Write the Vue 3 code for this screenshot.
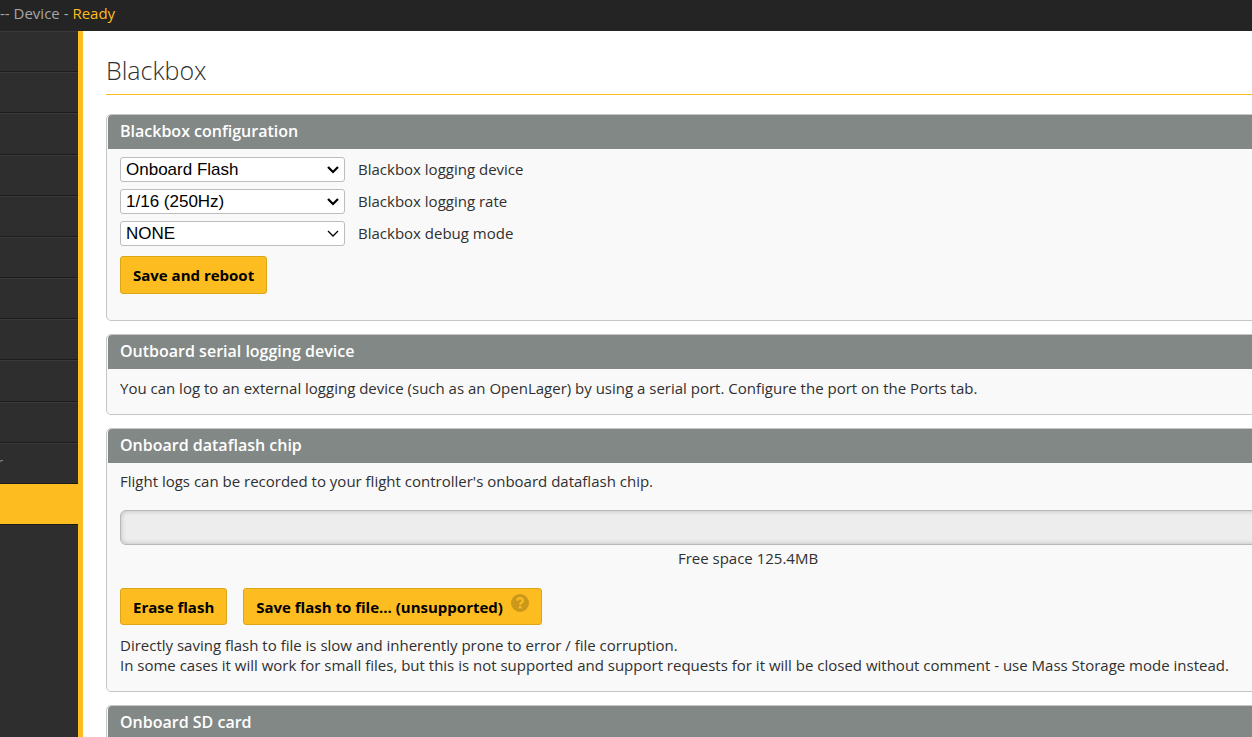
<script setup>
import { ref } from 'vue'

const tabs = ['', '', '', '', '', '', '', '', '', '', 'r', '']
const activeTab = 11

const device = ref('Onboard Flash')
const rate = ref('1/16 (250Hz)')
const debug = ref('NONE')
const fields = [
  { id: 'device', label: 'Blackbox logging device', model: device, stroke: 2.2 },
  { id: 'rate', label: 'Blackbox logging rate', model: rate, stroke: 2.2 },
  { id: 'debug', label: 'Blackbox debug mode', model: debug, stroke: 1.3 },
]
</script>

<template>
  <div class="app">
    <header class="status">-- Device - <span class="ready">Ready</span></header>
    <div class="columns">
      <nav class="sidebar">
        <ul>
          <li v-for="(tab, i) in tabs" :key="i" :class="{ active: i === activeTab }">{{ tab }}</li>
        </ul>
      </nav>
      <main class="content">
        <h1>Blackbox</h1>

        <section class="panel">
          <h2>Blackbox configuration</h2>
          <div class="body config">
            <div v-for="f in fields" :key="f.id" class="field">
              <div class="picker">
                <select :id="f.id">
                  <option>{{ f.model.value }}</option>
                </select>
                <svg class="chevron" width="14" height="10" viewBox="0 0 14 10" fill="none" stroke="#000">
                  <path d="M2 2l5 5 5-5" :stroke-width="f.stroke" />
                </svg>
              </div>
              <label :for="f.id">{{ f.label }}</label>
            </div>
            <button type="button" class="btn">Save and reboot</button>
          </div>
        </section>

        <section class="panel">
          <h2>Outboard serial logging device</h2>
          <div class="body serial">
            <p>You can log to an external logging device (such as an OpenLager) by using a serial port. Configure the port on the Ports tab.</p>
          </div>
        </section>

        <section class="panel">
          <h2>Onboard dataflash chip</h2>
          <div class="body flash">
            <p>Flight logs can be recorded to your flight controller's onboard dataflash chip.</p>
            <div class="meter"></div>
            <p class="free">Free space 125.4MB</p>
            <div class="actions">
              <button type="button" class="btn">Erase flash</button>
              <button type="button" class="btn">
                <span>Save flash to file... (unsupported)</span>
                <svg class="help" width="18" height="18" viewBox="0 0 18 18">
                  <circle cx="9" cy="9" r="9" fill="#cb981b" />
                  <path d="M6.2 6.6c.2-3.4 5.800-3.200 5.700 0C11.800 8.600 9.200 8.600 9.200 10.800" fill="none" stroke="#fdbc20" stroke-width="2.200" />
                  <rect x="8" y="12" width="2.400" height="2.400" fill="#fdbc20" />
                </svg>
              </button>
            </div>
            <p>Directly saving flash to file is slow and inherently prone to error / file corruption.<br>In some cases it will work for small files, but this is not supported and support requests for it will be closed without comment - use Mass Storage mode instead.</p>
          </div>
        </section>

        <section class="panel">
          <h2>Onboard SD card</h2>
          <div class="body"></div>
        </section>
      </main>
    </div>
  </div>
</template>

<style>
body {
  margin: 0;
  overflow: hidden;
}
</style>

<style scoped>
.app {
  display: flex;
  flex-direction: column;
  height: 100vh;
  overflow: hidden;
  background: #fff;
  color: #303030;
  font: 15px/20px "Open Sans", sans-serif;
}
.status {
  flex: none;
  height: 31px;
  box-sizing: border-box;
  padding-top: 3px;
  background: #242424;
  color: #a6a6a6;
  white-space: nowrap;
}
.ready {
  color: #fdbc20;
}
.columns {
  display: flex;
  flex: 1;
  min-height: 0;
}
.sidebar {
  flex: none;
  width: 78px;
  overflow: hidden;
  background: #2e2e2e;
  border-right: 5px solid #fdbc20;
}
ul {
  display: grid;
  grid-auto-rows: 1fr;
  height: 494px;
  margin: 0;
  padding: 0;
  list-style: none;
}
li {
  box-sizing: border-box;
  padding-top: 8px;
  border-top: 1px solid #3a3a3a;
  border-bottom: 1px solid #1c1c1c;
  color: #8c8c8c;
  text-indent: -3px;
}
li.active {
  background: #fdbc20;
  border-top-color: #fdbc20;
}
/* The settings pane is wider than the window and is cut off at its right edge. */
.content {
  flex: 1;
  min-width: 0;
  margin-right: -138px;
  padding: 23px 0 0 23px;
}
h1 {
  margin: 0 0 19px;
  padding-bottom: 8px;
  border-bottom: 1px solid #fdbc20;
  font-size: 25px;
  line-height: 32px;
  font-weight: 300;
}
.panel {
  margin-bottom: 13px;
  border: 1px solid #c6c6c6;
  border-radius: 5px;
  background: #f9f9f9;
}
h2 {
  margin: 0 1px;
  padding: 0 12px 2px;
  border-radius: 4px 4px 0 0;
  background: #828885;
  color: #fff;
  font-size: 16px;
  line-height: 32px;
  font-weight: 600;
}
.body {
  padding: 8px 13px 24px;
}
.config {
  padding-bottom: 26px;
}
.field {
  display: flex;
  align-items: center;
  gap: 13px;
  margin-bottom: 7px;
}
label {
  padding-bottom: 2px;
}
.picker {
  position: relative;
  width: 225px;
}
select {
  display: block;
  appearance: none;
  width: 100%;
  height: 25px;
  margin: 0;
  padding: 0 28px 0 5px;
  border: 1px solid #bdbdbd;
  border-radius: 3px;
  background: #fff;
  color: #000;
  font: 17px "Liberation Sans", Arial, sans-serif;
}
.chevron {
  position: absolute;
  right: 5px;
  top: 8px;
  pointer-events: none;
}
.btn {
  display: inline-flex;
  align-items: center;
  gap: 8px;
  height: 38px;
  margin: 0;
  padding: 0 12px;
  border: 1px solid #dba718;
  border-radius: 3px;
  background: #fdbc20;
  color: #000;
  font: 700 15px/20px "Open Sans", sans-serif;
  white-space: nowrap;
}
.config .btn {
  margin-top: 3px;
}
p {
  margin: 0;
}
.serial {
  padding: 9px 13px 16px;
}
.flash {
  padding: 8px 13px 16px;
}
.meter {
  box-sizing: border-box;
  height: 35px;
  margin: 19px 0 3px;
  border: 1px solid #b8b8b8;
  border-radius: 6px;
  background: #ededed;
  box-shadow: inset 0 0 5px #bbb;
}
.free {
  text-align: center;
}
.actions {
  display: flex;
  gap: 16px;
  margin: 20px 0 10px;
}
.actions .btn {
  height: 37px;
}
.help {
  align-self: flex-start;
  margin-top: 5px;
}
</style>
